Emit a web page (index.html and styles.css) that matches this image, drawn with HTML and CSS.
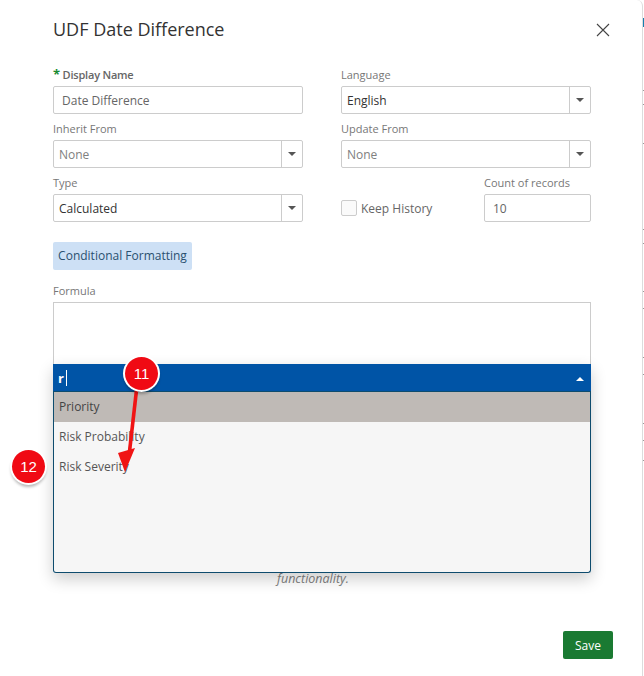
FILE: index.html
```html
<!DOCTYPE html>
<html lang="en">
<head>
<meta charset="utf-8">
<title>UDF Date Difference</title>
<link rel="stylesheet" href="styles.css">
</head>
<body>
<div class="edge"></div>
<div class="modal">
  <header class="head">
    <h1 class="title">UDF Date Difference</h1>
    <svg class="close" width="14" height="14" viewBox="0 0 14 14"><path d="M1 1L13 13M13 1L1 13" stroke="#444" stroke-width="1.1" fill="none"/></svg>
  </header>
  <div class="grid">
    <div class="field">
      <label class="label strong"><span class="req">*</span> Display Name</label>
      <div class="box text">Date Difference</div>
    </div>
    <div class="field">
      <label class="label">Language</label>
      <div class="box select"><span class="val dark">English</span><span class="arrow"><i></i></span></div>
    </div>
    <div class="field">
      <label class="label">Inherit From</label>
      <div class="box select"><span class="val">None</span><span class="arrow"><i></i></span></div>
    </div>
    <div class="field">
      <label class="label">Update From</label>
      <div class="box select"><span class="val">None</span><span class="arrow"><i></i></span></div>
    </div>
    <div class="field">
      <label class="label">Type</label>
      <div class="box select"><span class="val dark">Calculated</span><span class="arrow"><i></i></span></div>
    </div>
    <div class="split">
      <div class="keep"><span class="check"></span><span>Keep History</span></div>
      <div class="field count">
        <label class="label">Count of records</label>
        <div class="box text">10</div>
      </div>
    </div>
  </div>
  <button class="cond">Conditional Formatting</button>
  <label class="label formula-label">Formula</label>
  <div class="formula">
    <div class="textarea"></div>
    <div class="picker">
      <div class="picker-bar"><span class="typed">r</span><span class="caret"></span><i class="up"></i></div>
      <ul class="list">
        <li class="active">Priority</li>
        <li>Risk Probability</li>
        <li>Risk Severity</li>
      </ul>
    </div>
    <p class="hint">functionality.</p>
  </div>
  <footer class="foot"><button class="save">Save</button></footer>
</div>
<svg class="callout-arrow" width="40" height="120" viewBox="0 0 40 120"><path d="M22.500 20L15 86" stroke="#f01414" stroke-width="3.600" fill="none"/><path d="M4 83L21 78L11 102Z" fill="#f01414"/></svg>
<span class="badge b11">11</span>
<span class="badge b12">12</span>
</body>
</html>
```
FILE: styles.css
```css
* { box-sizing: border-box; }
html, body { margin: 0; padding: 0; }
body { width: 644px; height: 676px; background: #fff; font-family: "Open Sans", sans-serif; overflow: hidden; position: relative; color: #666; }
.edge { position: absolute; left: 643px; top: 0; width: 1px; height: 676px; background:
  linear-gradient(#1680b0, #1680b0) 0 18px / 1px 9px no-repeat,
  linear-gradient(#999, #999) 0 90px / 1px 1px no-repeat,
  linear-gradient(#999, #999) 0 104px / 1px 1px no-repeat,
  linear-gradient(#999, #999) 0 143px / 1px 1px no-repeat,
  linear-gradient(#999, #999) 0 229px / 1px 1px no-repeat,
  linear-gradient(#999, #999) 0 243px / 1px 1px no-repeat,
  linear-gradient(#999, #999) 0 291px / 1px 1px no-repeat,
  linear-gradient(#999, #999) 0 308px / 1px 1px no-repeat,
  linear-gradient(#999, #999) 0 357px / 1px 1px no-repeat,
  linear-gradient(#999, #999) 0 374px / 1px 1px no-repeat,
  linear-gradient(#999, #999) 0 423px / 1px 1px no-repeat,
  linear-gradient(#999, #999) 0 440px / 1px 1px no-repeat,
  linear-gradient(#999, #999) 0 460px / 1px 1px no-repeat; }
.modal { width: 643px; height: 676px; padding: 0 53px; background: #fff; border-right: 1px solid #dcdcdc; border-top-right-radius: 6px; }
.head { display: flex; justify-content: space-between; align-items: center; height: 60px; }
.title { margin: -2px 0 0; font-size: 18px; font-weight: 400; color: #333; line-height: 58px; }
.close { margin-right: -21px; }
.grid { display: grid; grid-template-columns: 250px 250px; column-gap: 38px; row-gap: 0; }
.field { display: flex; flex-direction: column; height: 54px; }
.label { display: block; font-size: 11px; line-height: 14px; margin-top: 8px; margin-bottom: 4px; color: #777; }
.label.strong { font-weight: 600; letter-spacing: -0.2px; color: #666; }
.req { color: #1a8a32; font-weight: 700; font-size: 13px; line-height: 0; }
.box { height: 28px; border: 1px solid #ccc; border-radius: 2px; font-size: 12px; display: flex; align-items: center; color: #666; background: #fff; }
.text { padding-left: 8px; }
.select .val { flex: 1; padding-left: 5px; color: #808080; }
.select .val.dark { color: #333; }
.arrow { width: 21px; height: 100%; border-left: 1px solid #ccc; display: flex; align-items: center; justify-content: center; }
.arrow i { width: 0; height: 0; border-left: 4px solid transparent; border-right: 4px solid transparent; border-top: 4px solid #555; }
.split { display: flex; justify-content: space-between; align-items: flex-end; height: 54px; }
.keep { display: flex; align-items: center; gap: 4px; height: 28px; font-size: 12px; color: #666; }
.check { width: 16px; height: 16px; border: 1px solid #ccc; border-radius: 2px; background: #fafafa; }
.count { width: 107px; }
.cond { display: block; margin-top: 20px; height: 28px; width: 139px; padding: 0 0 2px; border: 0; border-radius: 2px; background: #cde0f5; color: #2a5070; font: 400 12px "Open Sans", sans-serif; }
.formula-label { margin-top: 14px; }
.formula { position: relative; width: 538px; }
.textarea { height: 100px; border: 1px solid #ccc; }
.picker { position: absolute; left: 0; top: 62px; width: 538px; z-index: 2; box-shadow: 0 6px 16px rgba(0,0,0,.2); border-radius: 2px; }
.picker-bar { height: 28px; background: #0054a6; border-bottom: 1px solid #0e4c6e; display: flex; align-items: center; padding-left: 5px; color: #fff; font-size: 13px; font-weight: 700; position: relative; }
.caret { width: 1px; height: 16px; background: #fff; margin-left: 2px; }
.up { position: absolute; right: 7px; top: 13px; width: 0; height: 0; border-left: 4px solid transparent; border-right: 4px solid transparent; border-bottom: 4px solid #fff; }
.list { list-style: none; margin: 0; padding: 0; height: 181px; background: #f6f6f6; border: 1px solid #0e4c6e; border-top: 0; border-radius: 0 0 3px 3px; }
.list li { height: 30px; line-height: 30px; padding-left: 5px; font-size: 12px; color: #555; }
.list li.active { background: #bfbab6; color: #444; }
.hint { position: absolute; left: 0; right: 18px; top: 270px; margin: 0; text-align: center; font-size: 12.500px; font-style: italic; color: #808080; line-height: 14px; }
.foot { position: absolute; left: 563px; top: 631px; }
.save { display: block; width: 50px; height: 28px; padding: 0; border: 0; border-radius: 2px; background: #1a7a32; color: #fff; font: 400 12px "Open Sans", sans-serif; }
.badge { position: absolute; width: 33px; height: 33px; border-radius: 50%; background: #f00a14; color: #fff; font: 400 15px/33px "Liberation Sans", sans-serif; text-align: center; box-shadow: 0 0 0 2px #fff, 0 3px 3px 1px rgba(0,0,0,.28); z-index: 5; }
.b11 { left: 125px; top: 357px; }
.b12 { left: 12px; top: 450px; }
.callout-arrow { position: absolute; left: 114px; top: 370px; z-index: 4; }
```
